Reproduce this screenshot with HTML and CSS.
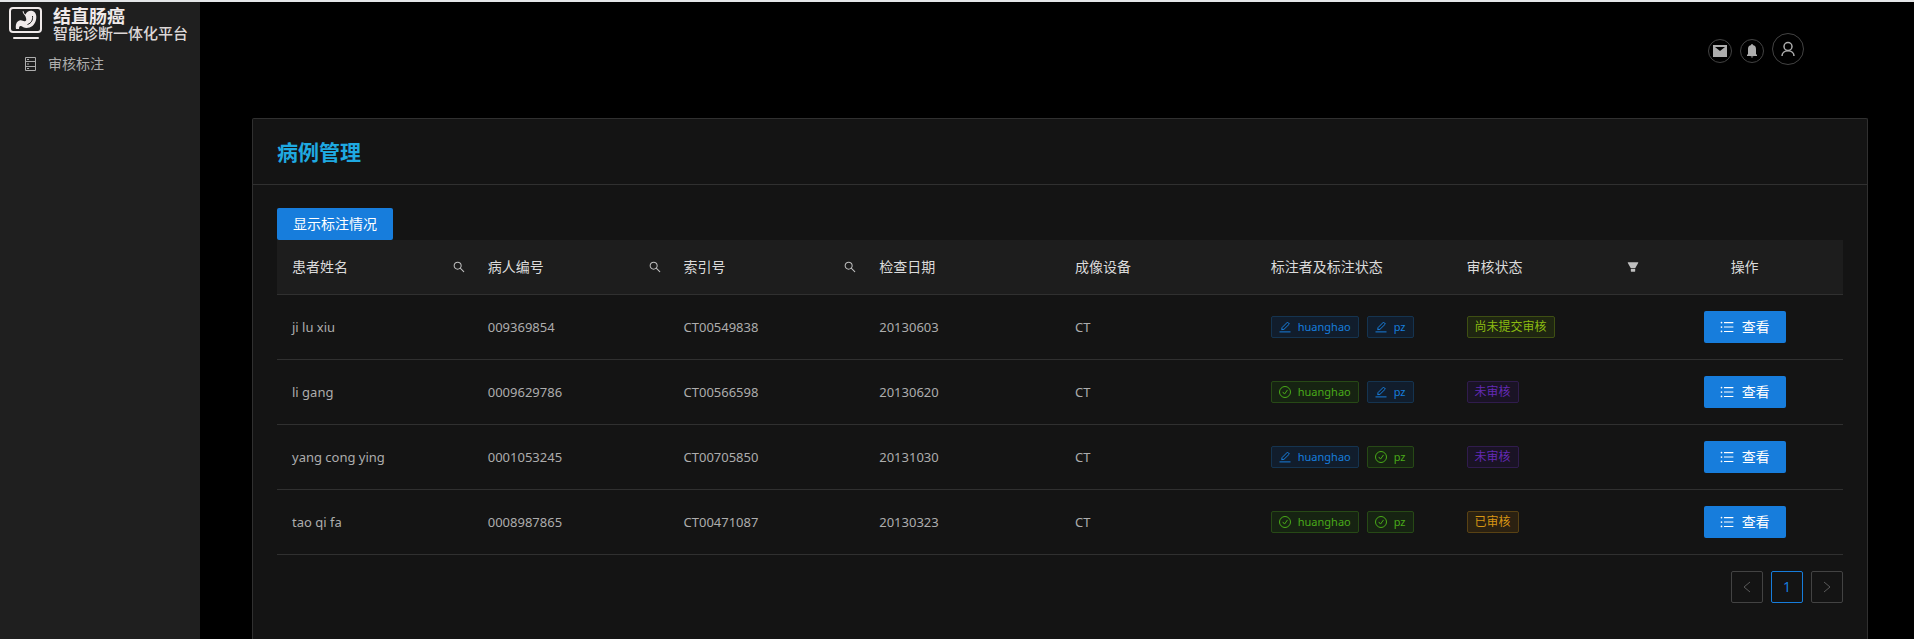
FILE: index.html
```html
<!DOCTYPE html>
<html lang="zh-CN">
<head>
<meta charset="utf-8">
<title>结直肠癌智能诊断一体化平台</title>
<link rel="stylesheet" href="styles.css">
</head>
<body>
<svg class="defs" aria-hidden="true">
  <symbol id="i-search" viewBox="64 64 896 896"><path d="M909.6 854.5L649.900 594.800C690.200 542.700 712 479 712 412c0-80.200-31.300-155.400-87.900-212.100-56.600-56.700-132-87.900-212.100-87.900s-155.500 31.300-212.100 87.900C143.200 256.500 112 331.800 112 412c0 80.100 31.300 155.500 87.900 212.100C256.500 680.800 331.800 712 412 712c67 0 130.600-21.800 182.700-62l259.700 259.600a8.200 8.200 0 0 0 11.600 0l43.600-43.500a8.200 8.200 0 0 0 0-11.600zM570.400 570.400C528 612.700 471.800 636 412 636s-116-23.300-158.400-65.600C211.300 528 188 471.800 188 412s23.300-116.100 65.600-158.400C296 211.300 352.200 188 412 188s116.100 23.200 158.400 65.600S636 352.200 636 412s-23.300 116.100-65.600 158.400z"/></symbol>
  <symbol id="i-filter" viewBox="64 64 896 896"><path d="M349 838c0 17.700 14.200 32 31.800 32h262.400c17.600 0 31.800-14.300 31.800-32V642H349v196zm531.100-684H143.900c-24.500 0-39.800 26.700-27.500 48l221.300 376h348.800l221.300-376c12.100-21.300-3.200-48-27.700-48z"/></symbol>
  <symbol id="i-edit" viewBox="0 0 12 12"><path d="M.5 10.900h11M2.700 8.700l.4-2.200L8.500 1.100l1.900 1.900L5 8.300z" fill="none" stroke="currentColor"/></symbol>
  <symbol id="i-check" viewBox="0 0 12 12"><g fill="none" stroke="currentColor"><circle cx="6" cy="6" r="5.500"/><path d="M3.700 5.900l1.800 2.200 3-4.200"/></g></symbol>
  <symbol id="i-list" viewBox="64 64 896 896"><path d="M912 192H328c-4.400 0-8 3.600-8 8v56c0 4.400 3.600 8 8 8h584c4.400 0 8-3.600 8-8v-56c0-4.400-3.600-8-8-8zm0 284H328c-4.400 0-8 3.600-8 8v56c0 4.400 3.600 8 8 8h584c4.400 0 8-3.600 8-8v-56c0-4.400-3.600-8-8-8zm0 284H328c-4.400 0-8 3.600-8 8v56c0 4.400 3.600 8 8 8h584c4.400 0 8-3.600 8-8v-56c0-4.400-3.600-8-8-8zM104 228a56 56 0 1 0 112 0 56 56 0 1 0-112 0zm0 284a56 56 0 1 0 112 0 56 56 0 1 0-112 0zm0 284a56 56 0 1 0 112 0 56 56 0 1 0-112 0z"/></symbol>
</svg>
<div class="layout">
  <aside class="sidebar">
    <div class="brand">
      <svg class="brand-mark" viewBox="0 0 34 34" aria-hidden="true">
        <rect x="1" y="1" width="31" height="24" rx="3" fill="none" stroke="currentColor" stroke-width="2"/>
        <path d="M14.500 4c.3 2 1 3 2 3.500 1-2.500 4-4.500 7-3.500 3.500 1.200 4.500 5 3.500 9-1.200 5-5 8-9.500 8-2.500 0-4-1.500-5.500-2-1.500-.3-2 1-2 3H7c-.6-4 .2-7.500 3.500-8.500 3-.8 4 1.500 6 .5 1.500-.8.500-3 0-4.500-.7-1.800-2.500-2.500-3-5z" fill="currentColor"/>
        <path d="M23.500 9c.5 4-1 7-5 8.500" fill="none" stroke="#1f1f1f"/>
        <path d="M5 31h24" stroke="currentColor" stroke-width="2" stroke-linecap="round"/>
      </svg>
      <div class="brand-text"><span class="brand-name">结直肠癌</span><span class="brand-sub">智能诊断一体化平台</span></div>
    </div>
    <nav><a class="menu-item" href="#">
      <svg class="menu-icon" viewBox="0 0 14 14" aria-hidden="true"><g fill="none" stroke="currentColor"><path d="M1.500.5h10v13h-10zM1.500 4.500h10M1.500 9.500h10"/><path d="M3 2.500h2M3 7h2M3 11.500h2"/></g></svg>
      <span>审核标注</span></a></nav>
  </aside>
  <main class="main">
    <header class="topbar">
      <button class="round" aria-label="消息"><svg viewBox="0 0 14 12" width="14" height="12"><path d="M0 0h14v12H0z" fill="currentColor"/><path d="M2 2h10L7 6z" fill="#000"/></svg></button>
      <button class="round" aria-label="通知"><svg viewBox="0 0 12 14" width="12" height="14" fill="currentColor"><path d="M5.300 0h1.400v1C9 1.300 10 3 10 5v5.500h1V12H1v-1.500h1V5c0-2 1-3.700 3.300-4zM4.500 12.500h3L6 13.800z"/></svg></button>
      <button class="round round-lg" aria-label="用户"><svg viewBox="0 0 14 16" width="14" height="16" fill="none" stroke="currentColor" stroke-width="1.500"><circle cx="7" cy="5.500" r="4"/><path d="M1 15c0-3 2.500-5.300 6-5.300S13 12 13 15"/></svg></button>
    </header>
    <section class="card">
      <h1 class="card-title">病例管理</h1>
      <div class="card-body">
        <button class="btn">显示标注情况</button>
        <table class="table">
          <thead><tr>
            <th><div class="th">患者姓名<button class="tool" aria-label="搜索患者姓名"><svg><use href="#i-search"/></svg></button></div></th>
            <th><div class="th">病人编号<button class="tool" aria-label="搜索病人编号"><svg><use href="#i-search"/></svg></button></div></th>
            <th><div class="th">索引号<button class="tool" aria-label="搜索索引号"><svg><use href="#i-search"/></svg></button></div></th>
            <th>检查日期</th><th>成像设备</th><th>标注者及标注状态</th>
            <th><div class="th">审核状态<button class="tool" aria-label="筛选审核状态"><svg><use href="#i-filter"/></svg></button></div></th>
            <th class="center">操作</th>
          </tr></thead>
          <tbody>
            <tr><td>ji lu xiu</td><td>009369854</td><td>CT00549838</td><td>20130603</td><td>CT</td>
              <td><div class="tags"><span class="tag blue"><svg><use href="#i-edit"/></svg>huanghao</span><span class="tag blue"><svg><use href="#i-edit"/></svg>pz</span></div></td>
              <td><div class="tags"><span class="tag lime">尚未提交审核</span></div></td>
              <td class="center"><button class="btn"><svg><use href="#i-list"/></svg>查看</button></td></tr>
            <tr><td>li gang</td><td>0009629786</td><td>CT00566598</td><td>20130620</td><td>CT</td>
              <td><div class="tags"><span class="tag green"><svg><use href="#i-check"/></svg>huanghao</span><span class="tag blue"><svg><use href="#i-edit"/></svg>pz</span></div></td>
              <td><div class="tags"><span class="tag purple">未审核</span></div></td>
              <td class="center"><button class="btn"><svg><use href="#i-list"/></svg>查看</button></td></tr>
            <tr><td>yang cong ying</td><td>0001053245</td><td>CT00705850</td><td>20131030</td><td>CT</td>
              <td><div class="tags"><span class="tag blue"><svg><use href="#i-edit"/></svg>huanghao</span><span class="tag green"><svg><use href="#i-check"/></svg>pz</span></div></td>
              <td><div class="tags"><span class="tag purple">未审核</span></div></td>
              <td class="center"><button class="btn"><svg><use href="#i-list"/></svg>查看</button></td></tr>
            <tr><td>tao qi fa</td><td>0008987865</td><td>CT00471087</td><td>20130323</td><td>CT</td>
              <td><div class="tags"><span class="tag green"><svg><use href="#i-check"/></svg>huanghao</span><span class="tag green"><svg><use href="#i-check"/></svg>pz</span></div></td>
              <td><div class="tags"><span class="tag orange">已审核</span></div></td>
              <td class="center"><button class="btn"><svg><use href="#i-list"/></svg>查看</button></td></tr>
          </tbody>
        </table>
        <nav class="pager" aria-label="分页">
          <button class="page" disabled aria-label="上一页"><svg viewBox="0 0 12 12"><path d="M9 1L3 6l6 5"/></svg></button>
          <button class="page current" aria-current="page">1</button>
          <button class="page" disabled aria-label="下一页"><svg viewBox="0 0 12 12"><path d="M3 1l6 5-6 5"/></svg></button>
        </nav>
      </div>
    </section>
  </main>
</div>
</body>
</html>
```
FILE: styles.css
```css
* { box-sizing: border-box; }
body {
  margin: 0;
  background: #000;
  color: #adadad;
  border-top: 2px solid #e4e6e8;
  font: 13px/22px "Noto Sans", "Noto Sans CJK SC", sans-serif;
  overflow: hidden;
}
button { font: inherit; color: inherit; cursor: pointer; }
.defs { display: none; }
.layout { display: flex; height: calc(100vh - 2px); }

.sidebar { flex: none; width: 200px; background: #1f1f1f; }
.brand { display: flex; gap: 10px; padding: 5px 0 0 9px; color: #f0eaea; }
.brand-mark { flex: none; width: 34px; height: 34px; }
.brand-text { display: flex; flex-direction: column; font-family: "Noto Sans CJK SC", sans-serif; }
.brand-name { font-size: 18px; line-height: 17px; font-weight: 700; }
.brand-sub { font-size: 15px; line-height: 17px; font-weight: 500; color: #dcd7d7; }
.menu-item {
  display: flex;
  align-items: center;
  gap: 10px;
  margin-top: 12px;
  padding-left: 24px;
  color: #adadad;
  font-size: 14px;
  text-decoration: none;
}
.menu-icon { width: 14px; height: 14px; }

.main { flex: 1; min-width: 0; display: flex; flex-direction: column; padding: 31px 46px 0 52px; }
.topbar {
  display: flex;
  justify-content: flex-end;
  align-items: flex-end;
  gap: 8px;
  padding-right: 64px;
  margin-bottom: 53px;
}
.round {
  display: flex;
  align-items: center;
  justify-content: center;
  width: 24px;
  height: 24px;
  margin-bottom: 2px;
  padding: 0;
  border: 1px solid #434343;
  border-radius: 50%;
  background: none;
}
.round-lg { width: 32px; height: 32px; margin-bottom: 0; }

.card {
  flex: 1;
  background: #141414;
  border: 1px solid #303030;
  border-bottom: 0;
  border-radius: 2px 2px 0 0;
}
.card-title {
  margin: 0;
  padding: 16px 24px;
  border-bottom: 1px solid #303030;
  color: #1fa9e1;
  font: 700 21px/33px "Noto Sans CJK SC", sans-serif;
}
.card-body { padding: 23px 24px 0; }
.btn {
  display: inline-flex;
  align-items: center;
  gap: 8px;
  height: 32px;
  padding: 0 16px;
  border: 0;
  border-radius: 2px;
  background: #177ddc;
  color: #fff;
  font-size: 14px;
  vertical-align: top;
}
.btn svg { width: 14px; height: 14px; fill: currentColor; }

.table { width: 100%; table-layout: fixed; border-collapse: separate; border-spacing: 0; }
th, td { padding: 16px 16px 16px 15px; text-align: left; border-bottom: 1px solid #303030; }
th { background: #1d1d1d; color: #dbdbdb; font-size: 14px; font-weight: 400; }
.table .center { text-align: center; }
.th { display: flex; justify-content: space-between; align-items: center; margin-right: -8px; }
.tool { display: flex; padding: 0; border: 0; background: none; color: #bfbfbf; }
.tool svg { width: 12px; height: 12px; fill: currentColor; }
tbody td { height: 65px; }

.tags { display: flex; gap: 8px; }
.tag {
  display: flex;
  align-items: center;
  gap: 7px;
  height: 22px;
  padding: 0 7px;
  border: 1px solid;
  border-radius: 2px;
  font-size: 11px;
}
.tag svg { width: 12px; height: 12px; }
.blue { color: #177ddc; background: #111d2c; border-color: #153450; }
.green { color: #49aa19; background: #162312; border-color: #274916; }
.lime { color: #8bbb11; background: #1f2611; border-color: #3e4f13; }
.purple { color: #642ab5; background: #1a1325; border-color: #301c4d; }
.orange { color: #d89614; background: #2b2111; border-color: #594214; }
.lime, .purple, .orange { font-size: 12px; }

.pager { display: flex; justify-content: flex-end; gap: 8px; margin-top: 16px; }
.page {
  display: flex;
  align-items: center;
  justify-content: center;
  width: 32px;
  height: 32px;
  padding: 0;
  border: 1px solid #434343;
  border-radius: 2px;
  background: none;
  color: #5a5a5a;
}
.page svg { width: 12px; height: 12px; fill: none; stroke: currentColor; }
.current { border-color: #177ddc; color: #177ddc; font-size: 14px; }
```
